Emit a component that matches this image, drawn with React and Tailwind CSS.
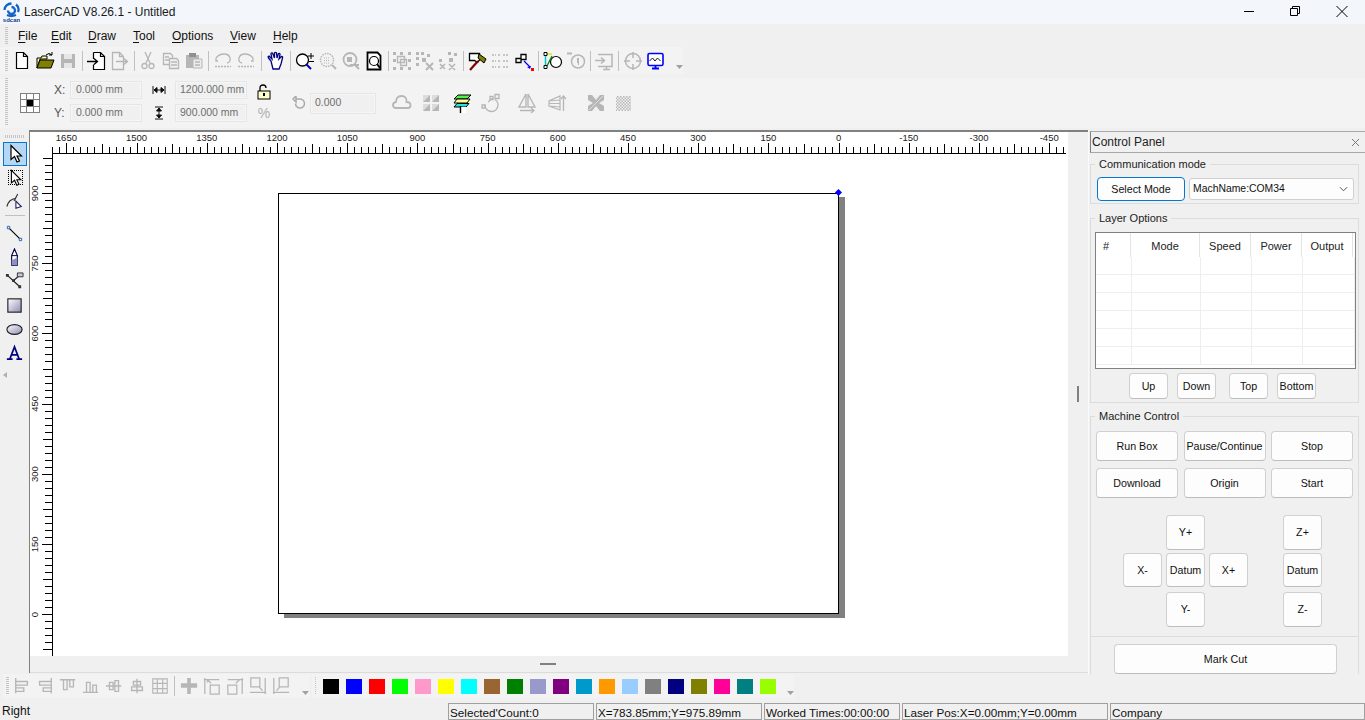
import React from "react";

const G = "#b6b6b6";

// toolbar drawings, all on a 20x20 box
const gray = { fill: "none", stroke: G, strokeWidth: 1.3 };
const icons = {
  newFile: <path d="M4.5 1.5h7l4 4v12h-11z M11.5 1.5v4h4" fill="#fff" stroke="#000" strokeWidth="1.2" />,
  open: (
    <>
      <path d="M2 7h4l1-2h5v3H5l-3 9z" fill="#ffff99" stroke="#000" />
      <path d="M2 17l3-8h14l-3 8z" fill="#808000" stroke="#000" />
      <path d="M11 4q3-3 6 0M17 4v-3M17 4h-3" fill="none" stroke="#000" />
    </>
  ),
  save: (
    <>
      <path d="M3 3h14v14H3z" fill={G} />
      <path d="M6 3h8v5H6zM6 12h8v5H6z" fill="#e6e6e6" />
    </>
  ),
  importFile: (
    <>
      <path d="M6.5 1.5h7l4 4v13h-11v-5M6.5 8V1.5M13.5 1.5v4h4" fill="#fff" stroke="#000" strokeWidth="1.2" />
      <path d="M0 10.5h10M7 7.5l3.5 3-3.5 3" fill="none" stroke="#000" strokeWidth="1.3" />
    </>
  ),
  exportFile: (
    <>
      <path d="M2.5 1.5h7l4 4v13h-11zM9.5 1.5v4h4" {...gray} />
      <path d="M6 10.5h11M14 7.5l3.5 3-3.5 3" {...gray} />
    </>
  ),
  cut: (
    <>
      <path d="M7 1l5 11M13 1l-5 11" {...gray} />
      <circle cx="6.5" cy="15" r="2.5" {...gray} />
      <circle cx="13.5" cy="15" r="2.5" {...gray} />
    </>
  ),
  copy: (
    <>
      <path d="M2.5 2.5h7l2 2v9h-9z" {...gray} />
      <path d="M8.5 7.5h7l2 2v8h-9z" fill="#f0f0f0" stroke={G} strokeWidth="1.3" />
      <path d="M4 6h4M4 9h4M10 11h6M10 14h6" {...gray} />
    </>
  ),
  paste: (
    <>
      <path d="M2 4h13v13H2z" fill={G} />
      <path d="M5 2h7v4H5z" fill="#8f8f8f" />
      <path d="M9 8h9v9H9z" fill="#ececec" stroke={G} />
      <path d="M11 11h5M11 14h5" {...gray} />
    </>
  ),
  undo: (
    <>
      <path d="M5 10H3V7M3 7q3-4 8-4t6 4-3 5" {...gray} />
      <path d="M2 15.5h16" stroke={G} strokeWidth="1.6" strokeDasharray="2 1" />
    </>
  ),
  redo: (
    <>
      <path d="M15 10h2V7M17 7q-3-4-8-4T3 7t3 5" {...gray} />
      <path d="M2 15.5h16" stroke={G} strokeWidth="1.6" strokeDasharray="2 1" />
    </>
  ),
  hand: (
    <path
      d="M5 10L2.5 7q-1-1.5.5-2l3 3-1-5q0-1.5 1.5-1L8.5 7V2q1-1.2 2 0l.5 5 1.5-4.5q1.5-.5 1.5 1L13 8l2.5-2.5q1.5 0 1 1.5L15 13l-2 5H7z"
      fill="#fff"
      stroke="#000080"
      strokeWidth="1.3"
    />
  ),
  zoomIn: (
    <>
      <circle cx="7.5" cy="9" r="6" fill="#fff" stroke="#000" strokeWidth="1.3" />
      <path d="M11.5 13.5L16 18" stroke="#0000c0" strokeWidth="2" />
      <path d="M13 5h6M16 2v6M14 10.5h5" stroke="#000" fill="none" />
    </>
  ),
  zoomDots: (
    <>
      <circle cx="9" cy="9" r="6.5" fill="none" stroke={G} strokeWidth="1.5" strokeDasharray="1.5 1" />
      <path d="M14 14l4 4" stroke={G} strokeWidth="2" />
      <path d="M6 7h6M6 9.5h6M6 12h6" stroke={G} strokeDasharray="1 1" />
    </>
  ),
  zoomPage: (
    <>
      <circle cx="9" cy="8.5" r="6.5" {...gray} strokeWidth="1.8" />
      <path d="M6 6h5v5H6z" fill={G} />
      <path d="M13 13l5 5M9 14h9" stroke={G} strokeWidth="2" />
    </>
  ),
  zoomFit: (
    <>
      <path d="M3.5 1.5h10l3 3v14h-13z" fill="#fff" stroke="#000" strokeWidth="1.8" />
      <circle cx="10" cy="10" r="4.5" fill="none" stroke="#000" strokeWidth="1.2" />
      <path d="M13 13l3 4" stroke="#000" strokeWidth="2" />
    </>
  ),
  group: (
    <>
      <path d="M1 1h3v3H1zM8 1h3v3H8zM16 1h3v3h-3zM1 8h3v3H1zM16 8h3v3h-3zM1 16h3v3H1zM8 16h3v3H8zM16 16h3v3h-3z" fill={G} />
      <path d="M5.5 5.5h7v6h-7zM8.5 8.5h6v6h-6z" {...gray} />
    </>
  ),
  ungroup: (
    <>
      <path d="M1 1h3v3H1zM6 1h3v3H6zM1 6h3v3H1zM7 7h4v4H7zM1 12h3v3H1zM12 3h3v3h-3z" fill={G} />
      <path d="M11 12l7 7M18 12l-7 7" stroke={G} strokeWidth="2" />
    </>
  ),
  ungroupAll: (
    <>
      <path d="M10 1h3v3h-3zM16 2h3v3h-3zM11 7h4v4h-4zM1 8h3v3H1z" fill={G} />
      <path d="M2 13l5 5M7 13l-5 5M11 13l6 6M17 13l-6 6" stroke={G} strokeWidth="1.6" />
    </>
  ),
  hammer: (
    <>
      <path d="M1.5 2.5h10v2l2 2-4 5-3-2H1.5z" fill="#fff" stroke="#000" strokeWidth="1.3" />
      <path d="M11 3l7 5-2 4-6-5z" fill="#808000" stroke="#000" />
      <path d="M10 10l-8 9" stroke="#800000" strokeWidth="2.2" />
    </>
  ),
  list: (
    <path
      d="M1 4h4M7 4h3M12 4h6M1 10h4M7 10h3M12 10h6M1 16h4M7 16h3M12 16h6"
      stroke={G}
      strokeWidth="1.5"
      strokeDasharray="2 1"
      fill="none"
    />
  ),
  nodes: (
    <>
      <path d="M2 7.5h5v4H2zM7 3.5h5v5H7z" fill="#fff" stroke="#000" strokeWidth="1.3" />
      <path d="M10 10l6 6" stroke="#0000ff" strokeWidth="1.2" />
      <path d="M17 15l-1 3-3-2z" fill="#0000ff" />
      <path d="M17 17h3v3h-3z" fill="#ff0000" />
    </>
  ),
  circlePath: (
    <>
      <circle cx="13" cy="11" r="5.5" fill="#fff" stroke="#000" strokeWidth="1.2" />
      <path d="M2.5 3v13" stroke="#00c8c8" strokeWidth="1.5" />
      <path d="M3 3h6" stroke="#e6e600" strokeWidth="1.5" />
      <path d="M4 15L9 5" stroke="#008000" strokeWidth="1.2" />
      <path d="M1 1.5h3v3H1zM1 14.5h3v3H1z" fill="#fff" stroke="#000" />
    </>
  ),
  clock: (
    <>
      <circle cx="12" cy="10.5" r="6.5" {...gray} strokeWidth="1.5" />
      <path d="M12 7v5" stroke={G} strokeWidth="2" />
      <path d="M1 2.5h5M12 13h1" stroke={G} strokeWidth="2" />
    </>
  ),
  monitorIn: (
    <>
      <path d="M4 3.5h14v12H4M9 18.5h7M12.5 15.5v3" {...gray} strokeWidth="1.5" />
      <path d="M1 9.5h9M7 6.5l3.5 3-3.5 3" {...gray} strokeWidth="1.5" />
    </>
  ),
  target: (
    <>
      <circle cx="10" cy="10" r="7.5" {...gray} strokeWidth="1.5" />
      <path d="M10 1v6M10 13v6M1 10h6M13 10h6" stroke={G} strokeWidth="1.5" />
    </>
  ),
  monitorWave: (
    <>
      <rect x="2" y="2.5" width="15" height="12" rx="1.5" fill="#fff" stroke="#0000ff" strokeWidth="1.6" />
      <path d="M3.5 10l3-3 2.5 3 2.5-3 3 3" fill="none" stroke="#000" strokeWidth=".9" />
      <path d="M6 17.5h7M9.5 15v2" stroke="#0000ff" strokeWidth="1.8" />
    </>
  ),
  cloud: (
    <path d="M5 15H3.5Q1 14.5 1 12t3-3q0-6 5.5-6t5 6q4 0 4 3t-2.5 3z" {...gray} strokeWidth="1.8" />
  ),
  quad: (
    <>
      <path d="M2 2h7v7H2zM11 2h7v7h-7zM2 11h7v7H2zM11 11h7v7h-7z" fill={G} />
      <path d="M2 2h7L2 9zM11 2h7l-7 7zM2 11h7l-7 7zM11 11h7l-7 7z" fill="#dcdcdc" />
    </>
  ),
  layers: (
    <>
      <path d="M6 2h13l-4 4H2z" fill="#55ee55" stroke="#000" />
      <path d="M5 6h13l-3 4H2z" fill="#ffff99" stroke="#000" />
      <path d="M5 10.5h12l-3 3.5H2z" fill="#22e6e6" stroke="#000" />
      <path d="M9 14h5v6H9z" fill="#fff" />
      <path d="M8.5 13v7" stroke="#000" strokeWidth="1.4" />
    </>
  ),
  nodeCircle: (
    <>
      <path d="M4 11.5a6.5 6.5 0 1 0 10-5" {...gray} strokeWidth="1.4" />
      <path d="M1 12h3v3H1zM14 1.5h4v4h-4zM9 3.5h3v3H9z" {...gray} />
      <path d="M7 9l5-4" {...gray} />
    </>
  ),
  mirrorH: (
    <>
      <path d="M9 1v13H2zM11 1v13h7z" {...gray} strokeWidth="1.4" />
      <path d="M3 17.5h14M14 15l3 2.5-3 2.5" {...gray} />
    </>
  ),
  mirrorV: (
    <>
      <path d="M13 3v14L2 13V8zM2 10.5h11M2 8l11-1M2 13l11 1" {...gray} strokeWidth="1.2" />
      <path d="M16.5 18V3M14 6l2.5-3L19 6" {...gray} />
    </>
  ),
  bowtie: (
    <>
      <path d="M2 2h16v16H2z" fill={G} />
      <path d="M6 2h8l-4 5zM6 18h8l-4-5zM2 7v6l5-3zM18 7v6l-5-3z" fill="#f0f0f0" />
      <path d="M3 17L17 3" stroke="#dcdcdc" />
    </>
  ),
  checker: (
    <>
      <rect x="2" y="3" width="15" height="15" fill="url(#chk)" />
      <defs>
        <pattern id="chk" width="3" height="3" patternUnits="userSpaceOnUse">
          <rect width="1.5" height="1.5" fill={G} />
          <rect x="1.5" y="1.5" width="1.5" height="1.5" fill={G} />
        </pattern>
      </defs>
    </>
  ),
  alignLeft: <path d="M3 1v17M3 5h13v4H3M3 12h9v4H3" {...gray} strokeWidth="1.5" />,
  alignRight: <path d="M17 1v17M17 5H4v4h13M17 12H8v4h9" {...gray} strokeWidth="1.5" />,
  alignTop: <path d="M1 3h17M5 3v11h4V3M12 3v8h4V3" {...gray} strokeWidth="1.5" />,
  alignBottom: <path d="M1 17h17M5 17V6h4v11M12 17V9h4v8" {...gray} strokeWidth="1.5" />,
  centerV: <path d="M1 10h17M5 6h4v8H5zM11 4h4v12h-4z" {...gray} strokeWidth="1.5" />,
  centerH: <path d="M10 2v16M6 5h8v4H6zM4 11h12v4H4z" {...gray} strokeWidth="1.5" />,
  tile: <path d="M2 2h16v16H2zM2 7h16M2 13h16M7 2v16M13 2v16" {...gray} strokeWidth="1.3" />,
  cross: <path d="M8 1h4v6h7v5h-7v7H8v-7H1V7h7z" fill={G} />,
  cornerTL: <path d="M2 1v18M1 3h17M8 9h10v10H8zM5 3l4 4M5 3v3M5 3h3" {...gray} strokeWidth="1.4" />,
  cornerTR: <path d="M18 1v18M2 3h17M2 9h10v10H2zM15 3l-4 4" {...gray} strokeWidth="1.4" />,
  cornerBR: <path d="M18 1v18M1 17h18M2 1h10v10H2zM15 15l-4-4" {...gray} strokeWidth="1.4" />,
  cornerBL: <path d="M2 1v18M1 17h18M8 1h10v10H8zM5 15l4-4" {...gray} strokeWidth="1.4" />,
  arrow: <path d="M6 1.5v14l3.5-3 2.5 5.5 2.5-1-2.5-5h4.5z" fill="#fff" stroke="#000" strokeWidth="1.2" />,
  pen: (
    <>
      <path d="M1 15Q3 7 11 6" fill="none" stroke="#333" strokeWidth="1.3" />
      <path d="M13 1L9 9" stroke="#333" strokeWidth="1.3" />
      <path d="M11 9l6 6-6 2z" fill="#fff" stroke="#202060" strokeWidth="1.2" />
    </>
  ),
  line: (
    <>
      <path d="M4 4l12 12" stroke="#000" strokeWidth="1.2" />
      <path d="M2.5 2.5h2.5v2.5h-2.5zM15 15h2.5v2.5H15z" fill="#fff" stroke="#2060c0" />
    </>
  ),
  nib: (
    <>
      <path d="M10 1l3 7v10H7V8z" fill="#fff" stroke="#000040" strokeWidth="1.2" />
      <path d="M7 13l6-3v8H7z" fill="#9090c0" />
      <path d="M7 8h6" stroke="#000040" />
    </>
  ),
  bezier: (
    <>
      <path d="M2 3l13 12M9 9l7-6" stroke="#222" strokeWidth="1.3" />
      <path d="M1 2h3v3H1zM14 14h3v3h-3zM7.5 7.5h3v3h-3z" fill="#333" />
      <path d="M13 1h6v4h-6z" fill="#c8c8e0" stroke="#333" />
    </>
  ),
  rect: (
    <>
      <defs>
        <linearGradient id="shade" x1="0" y1="0" x2="1" y2="1">
          <stop offset="0" stopColor="#fff" />
          <stop offset="1" stopColor="#8c8cb4" />
        </linearGradient>
      </defs>
      <rect x="3" y="3" width="14" height="14" fill="url(#shade)" stroke="#222" strokeWidth="1.2" />
    </>
  ),
  ellipse: <ellipse cx="10" cy="10" rx="8" ry="5.2" fill="url(#shade)" stroke="#222" strokeWidth="1.2" />,
  letterA: <path d="M2 16h6M12 16h6M5 16L10 3l5 13M7 11.5h6" fill="none" stroke="#000080" strokeWidth="1.8" />,
};

const Icon = ({ name, className = "w-[20px] h-[20px]" }) => (
  <svg viewBox="0 0 20 20" className={className}>
    {icons[name]}
  </svg>
);

const Grip = ({ className = "" }) => (
  <div className={`w-[3px] bg-[repeating-linear-gradient(to_bottom,#c4c4c4_0,#c4c4c4_1px,transparent_1px,transparent_2px)] ${className}`} />
);

const Caret = () => (
  <svg viewBox="0 0 7 4" className="w-[7px] h-[4px] self-end mb-[3px]">
    <path d="M0 0h7L3.5 4z" fill="#a0a0a0" />
  </svg>
);

// entries starting with w- are separators, the class gives their slot width
const fileBar = [
  "newFile", "open", "save", "w-[6px]", "importFile", "exportFile", "w-[5px]", "cut", "copy", "paste", "w-[6px]",
  "undo", "redo", "w-[7px]", "hand", "w-[6px]", "zoomIn", "zoomDots", "zoomPage", "zoomFit", "w-[5px]",
  "group", "ungroup", "ungroupAll", "w-[7px]", "hammer", "list", "nodes", "w-[6px]", "circlePath", "clock", "w-[5px]",
  "monitorIn", "w-[6px]", "target", "monitorWave",
];

const alignBar = [
  "alignLeft", "alignRight", "alignTop", "alignBottom", "centerV", "centerH", "tile", "w-[6px]",
  "cross", "cornerTL", "cornerTR", "cornerBR", "cornerBL",
];

const BarItems = ({ items, iconClass = "w-[20px] h-[20px]" }) =>
  items.map((item, i) =>
    item.startsWith("w-[") ? (
      <div key={i} className={`${item} h-[20px] flex justify-center`}>
        <div className="w-px h-full bg-[#c0c0c0]" />
      </div>
    ) : (
      <div key={i} className="w-[23px] h-[22px] flex items-center justify-center">
        <Icon name={item} className={iconClass} />
      </div>
    )
  );

const menus = [
  ["F", "ile", "w-[33px]"],
  ["E", "dit", "w-[37px]"],
  ["D", "raw", "w-[45px]"],
  ["T", "ool", "w-[39px]"],
  ["O", "ptions", "w-[58px]"],
  ["V", "iew", "w-[43px]"],
  ["H", "elp", "w-[30px]"],
];

const swatches = [
  "bg-[#000000]", "bg-[#0000ff]", "bg-[#ff0000]", "bg-[#00ff00]", "bg-[#ff99cc]", "bg-[#ffff00]", "bg-[#00ffff]",
  "bg-[#996633]", "bg-[#008000]", "bg-[#9999cc]", "bg-[#800080]", "bg-[#0099cc]", "bg-[#ff9900]", "bg-[#99ccff]",
  "bg-[#808080]", "bg-[#000080]", "bg-[#808000]", "bg-[#ff0099]", "bg-[#008080]", "bg-[#99ff00]",
];

const Field = ({ children, className = "" }) => (
  <div className={`h-[18px] bg-[#f0f0f0] border border-[#e6e6e6] shadow-[inset_0_0_0_1px_#f6f6f6] text-[10.5px] text-[#6f6f6f] whitespace-nowrap flex items-center ${className}`}>
    {children}
  </div>
);

const Logo = () => (
  <svg viewBox="0 0 17 20" className="w-[17px] h-[20px] ml-[3px]">
    <path d="M8.5 5a3.5 3.5 0 1 1-3.5 3.5M8.500 1.500a7 6.500 0 0 0-7 6.500M13 2.500a6.500 6.500 0 0 1 2 7.500M4 13q4 2 9 0" fill="none" stroke="#1464c8" strokeWidth="2.3" />
    <text x="8.5" y="19.5" textAnchor="middle" fontSize="6" fontWeight="700" fontFamily="Liberation Sans" fill="#103c96">sdcan</text>
  </svg>
);

const TitleBar = () => (
  <div className="h-[24px] bg-[#f3f7fc] flex items-center">
    <Logo />
    <span className="ml-[4px] text-[12px] text-[#1a1a1a]">LaserCAD V8.26.1 - Untitled</span>
    <div className="ml-auto flex items-center text-black">
      <svg viewBox="0 0 46 24" className="w-[46px] h-[24px]"><path d="M18 11.5h10" stroke="#000" /></svg>
      <svg viewBox="0 0 46 24" className="w-[46px] h-[24px]"><path d="M18.5 8.5h7v7h-7zM20.5 8.5v-2h7v7h-2" fill="none" stroke="#000" /></svg>
      <svg viewBox="0 0 46 24" className="w-[47px] h-[24px]"><path d="M18 6l11 11M29 6L18 17" stroke="#000" /></svg>
    </div>
  </div>
);

const MenuBar = () => (
  <div className="h-[23px] flex items-center">
    <Grip className="h-[18px] ml-[5px]" />
    <div className="flex ml-[10px] text-[12px] text-[#111]">
      {menus.map(([key, rest, width]) => (
        <span key={key} className={width}>
          <span className="underline underline-offset-2">{key}</span>
          {rest}
        </span>
      ))}
    </div>
  </div>
);

const FileToolbar = () => (
  <div className="h-[27px] w-[683px] bg-[#f3f3f3] flex items-center">
    <Grip className="h-[22px] ml-[5px] mr-[2.5px]" />
    <BarItems items={fileBar} />
    <div className="ml-[8px] h-[22px] flex"><Caret /></div>
  </div>
);

const SizeRow = ({ label, value, size, icon }) => (
  <div className="flex items-center h-[18px]">
    <span className="w-[16px] text-[12px] text-[#555]">{label}</span>
    <Field className="w-[72px] pl-[5px]">{value}</Field>
    <div className="w-[33px] flex justify-center">{icon}</div>
    <Field className="w-[72px] pl-[4px]">{size}</Field>
  </div>
);

const WidthMark = (
  <svg viewBox="0 0 14 10" className="w-[14px] h-[10px]"><path d="M1 1v8M13 1v8M2 5h10M2 5l3-2.5v5zM12 5L9 2.5v5z" stroke="#111" /></svg>
);
const HeightMark = (
  <svg viewBox="0 0 10 14" className="w-[10px] h-[14px]"><path d="M1 1h8M1 13h8M5 2v10M5 2L2.5 5h5zM5 12L2.5 9h5z" stroke="#111" /></svg>
);

const PropsToolbar = () => (
  <div className="h-[50px] mt-[4px] bg-[#f3f3f3] flex items-start">
    <Grip className="h-[48px] ml-[5px]" />
    <div className="ml-[12px] mt-[15px] w-[20px] h-[20px] grid grid-cols-3 gap-px bg-[#808080] border border-[#808080]">
      {[0, 1, 2, 3, 4, 5, 6, 7, 8].map((n) => (
        <div key={n} className={n === 4 ? "bg-black" : "bg-white"} />
      ))}
    </div>
    <div className="ml-[14px] mt-[3px] flex flex-col gap-[5px]">
      <SizeRow label="X:" value="0.000 mm" size="1200.000 mm" icon={WidthMark} />
      <SizeRow label="Y:" value="0.000 mm" size="900.000 mm" icon={HeightMark} />
    </div>
    <div className="w-[34px] flex flex-col items-center mt-[6px] ml-0">
      <svg viewBox="0 0 14 16" className="w-[14px] h-[16px]">
        <path d="M3 7V4q0-3 3-3t3 3" fill="none" stroke="#000" strokeWidth="1.3" />
        <rect x="1" y="7" width="12" height="8" fill="#ffffcc" stroke="#000" />
        <rect x="6" y="9" width="2" height="3" fill="#000" />
      </svg>
      <span className="mt-[6px] text-[14px] leading-[14px] text-[#b0b0b0]">%</span>
    </div>
    <div className="mt-[14px] flex items-center h-[22px]">
      <svg viewBox="0 0 14 14" className="w-[14px] h-[14px] ml-[11px] mr-[4px]">
        <path d="M4 3h4a4.5 4.5 0 1 1-4.5 4.5M4 0L1 3l3 3z" fill="none" stroke="#aaa" strokeWidth="1.5" />
      </svg>
      <div className="h-[21px] w-[66px] bg-[#f0f0f0] border border-[#e6e6e6] shadow-[inset_0_0_0_1px_#f6f6f6] text-[10.5px] text-[#6f6f6f] flex items-center pl-[4px]">0.000</div>
      <Icon name="cloud" className="ml-[16px] w-[20px] h-[20px]" />
      <Icon name="quad" className="ml-[9px] w-[20px] h-[20px]" />
      <Icon name="layers" className="ml-[11px] w-[20px] h-[20px]" />
      <Icon name="nodeCircle" className="ml-[9px] w-[20px] h-[20px]" />
      <Icon name="mirrorH" className="ml-[16px] w-[20px] h-[20px]" />
      <Icon name="mirrorV" className="ml-[10px] w-[20px] h-[20px]" />
      <Icon name="bowtie" className="ml-[19px] w-[20px] h-[20px]" />
      <Icon name="checker" className="ml-[8px] w-[20px] h-[20px]" />
    </div>
  </div>
);

const drawTools = ["line", "nib", "bezier", "rect", "ellipse", "letterA"];

const LeftToolbar = () => (
  <div className="w-[29px] shrink-0 flex flex-col items-center pt-[5px]">
    <div className="w-[20px] h-[3px] bg-[repeating-linear-gradient(to_right,#c4c4c4_0,#c4c4c4_1px,transparent_1px,transparent_2px)]" />
    <div className="mt-[4px] w-[24px] h-[24px] bg-[#b5d7f3] border border-[#0078d7] flex items-center justify-center">
      <Icon name="arrow" className="w-[20px] h-[20px]" />
    </div>
    <div className="relative w-[24px] h-[24px] flex items-center justify-center">
      <Icon name="arrow" className="w-[18px] h-[18px]" />
      <div className="absolute left-[5px] top-[4px] w-[15px] h-[15px] border border-dotted border-black" />
    </div>
    <div className="w-[24px] h-[24px] flex items-center justify-center">
      <Icon name="pen" className="w-[18px] h-[18px]" />
    </div>
    <div className="mt-[1px] mb-[5px] w-[20px] h-px bg-[#c0c0c0]" />
    {drawTools.map((name) => (
      <div key={name} className="w-[24px] h-[24px] flex items-center justify-center">
        <Icon name={name} className="w-[19px] h-[19px]" />
      </div>
    ))}
    <svg viewBox="0 0 4 6" className="w-[4px] h-[6px] mt-[7px] mr-[20px]">
      <path d="M4 0v6L0 3z" fill="#b0b0b0" />
    </svg>
  </div>
);

const tickRange = Array.from({ length: 146 }, (_, i) => i - 112);
const rowRange = Array.from({ length: 100 }, (_, i) => i - 6);
const hLabels = [1650, 1500, 1350, 1200, 1050, 900, 750, 600, 450, 300, 150, 0, -150, -300, -450];
const vLabels = [900, 750, 600, 450, 300, 150, 0];

// rulers use window coordinates through the viewBox
const Rulers = () => {
  const unit = 7.02;
  const xOf = (k) => Math.round(838.6 + k * unit) + 0.5;
  const yOf = (k) => Math.round(193 + k * unit) + 0.5;
  return (
    <svg viewBox="30 132 1038 524" className="absolute inset-0 w-full h-full" shapeRendering="crispEdges">
      <path d="M52 153.5H1066M52.5 153V656" stroke="#000" />
      {tickRange
        .filter((k) => xOf(k) > 52 && xOf(k) < 1067)
        .map((k) => (
          <path key={k} d={`M${xOf(k)} 153V${k % 10 === 0 ? 143 : k % 5 === 0 ? 144 : 147}`} stroke="#000" />
        ))}
      {rowRange
        .filter((k) => yOf(k) > 154 && yOf(k) < 656)
        .map((k) => (
          <path key={k} d={`M52 ${yOf(k)}H${k % 10 === 0 ? 42 : k % 5 === 0 ? 43 : 45}`} stroke="#000" />
        ))}
      <g fontFamily="Liberation Sans" fontSize="9.5" fill="#222" shapeRendering="auto">
        {hLabels.map((n) => (
          <text key={n} x={838.6 - (n / 150) * 70.2} y="141" textAnchor="middle">{n}</text>
        ))}
        {vLabels.map((n) => {
          const y = 614.5 - (n / 150) * 70.2;
          return (
            <text key={n} transform={`translate(38 ${y}) rotate(-90)`} textAnchor="middle">{n}</text>
          );
        })}
      </g>
    </svg>
  );
};

const Canvas = () => (
  <div className="flex-1 mb-[1px] flex flex-col border-l border-t-2 border-[#808080]">
    <div className="flex flex-1 min-h-0">
      <div className="relative flex-1 bg-white overflow-hidden">
        <Rulers />
        <div className="absolute left-[254px] top-[65px] w-[561px] h-[421px] bg-[#808080]" />
        <div className="absolute left-[248px] top-[61px] w-[561px] h-[421px] bg-white border border-black" />
        <div className="absolute left-[806px] top-[58px] w-[5px] h-[5px] bg-[#0000ff] rotate-45" />
      </div>
      <div className="w-[20px] flex items-center justify-center">
        <div className="w-[2px] h-[16px] bg-[#808080]" />
      </div>
    </div>
    <div className="h-[17px] border-b border-[#dcdcdc] flex items-center">
      <div className="ml-[510px] w-[16px] h-[2px] bg-[#808080]" />
    </div>
  </div>
);

const Btn = ({ children, className = "" }) => (
  <button className={`bg-[#fdfdfd] border border-[#d0d0d0] border-b-[#bdbdbd] rounded-[4px] text-[10.7px] text-[#111] flex items-center justify-center whitespace-nowrap ${className}`}>
    {children}
  </button>
);

const Group = ({ title, className = "", children }) => (
  <div className={`relative border border-[#dcdcdc] ${className}`}>
    <span className="absolute left-[4px] top-[-8px] px-[4px] bg-[#f0f0f0] text-[11px] leading-[14px] text-[#222]">{title}</span>
    {children}
  </div>
);

const columns = [
  ["#", "justify-start pl-[7px]"],
  ["Mode", "justify-center"],
  ["Speed", "justify-center"],
  ["Power", "justify-center"],
  ["Output", "justify-center"],
];

const LayerTable = () => (
  <div className="mt-[13px] ml-[4px] w-[261px] h-[137px] bg-white border border-[#808080] overflow-hidden">
    <div className="grid grid-cols-[35px_69px_51px_51px_51px] h-[24px]">
      {columns.map(([name, align]) => (
        <div key={name} className={`flex items-center pt-[2px] border-r border-[#e4e4e4] text-[11px] text-[#222] ${align}`}>{name}</div>
      ))}
    </div>
    {[0, 1, 2, 3, 4, 5].map((row) => (
      <div key={row} className="grid grid-cols-[36px_69px_51px_51px_1fr] h-[18px] border-b border-[#eeeeee]">
        {[0, 1, 2, 3, 4].map((c) => (
          <div key={c} className="border-r border-[#eeeeee]" />
        ))}
      </div>
    ))}
  </div>
);

const ControlPanel = () => (
  <div className="w-[277px] shrink-0 border-l border-[#fafafa] pl-[1px] pr-[6px] flex flex-col">
    <div className="mt-[1px] mr-[-6px] h-[22px] border-y border-l border-[#a8a8a8] border-l-[#808080] flex items-center pl-[1px] text-[12px] text-[#222]">
      Control Panel
      <svg viewBox="0 0 9 9" className="w-[9px] h-[9px] ml-auto mr-[5px]"><path d="M1 1l7 7M8 1L1 8" stroke="#777" /></svg>
    </div>

    <Group title="Communication mode" className="mt-[11px] h-[40px] flex items-center gap-[4px] pl-[6px] pr-[4px]">
      <button className="mt-[9px] w-[88px] h-[24px] pt-[1px] bg-[#fdfdfd] border-[1.5px] border-[#0078d7] rounded-[4px] text-[10.7px] text-[#111]">Select Mode</button>
      <div className="mt-[9px] w-[165px] h-[22px] pt-[1px] bg-[#fdfdfd] border border-[#d0d0d0] rounded-[3px] flex items-center justify-between pl-[3px] pr-[5px] text-[10.4px] text-[#111]">
        MachName:COM34
        <svg viewBox="0 0 10 6" className="w-[9px] h-[6px]"><path d="M1 1l4 4 4-4" fill="none" stroke="#444" /></svg>
      </div>
    </Group>

    <Group title="Layer Options" className="mt-[14px] h-[185px]">
      <LayerTable />
      <div className="mt-[4px] flex">
        <Btn className="ml-[38px] w-[39px] h-[26px]">Up</Btn>
        <Btn className="ml-[9px] w-[39px] h-[26px]">Down</Btn>
        <Btn className="ml-[13px] w-[39px] h-[26px]">Top</Btn>
        <Btn className="ml-[9px] w-[39px] h-[26px]">Bottom</Btn>
      </div>
    </Group>

    <Group title="Machine Control" className="mt-[13px] flex-1 border-b-0">
      <div className="mt-[14px] ml-[5px] grid grid-cols-[82px_82px_82px] gap-x-[5.5px] gap-y-[7px]">
        {["Run Box", "Pause/Continue", "Stop", "Download", "Origin", "Start"].map((label) => (
          <Btn key={label} className="h-[30px]">{label}</Btn>
        ))}
      </div>
      <div className="mt-[17px] flex">
        <div className="ml-[32px] grid grid-cols-[39px_39px_39px] gap-x-[4px] gap-y-[3px] grid-rows-[35px_36px_35px]">
          <div />
          <Btn>Y+</Btn>
          <div />
          <Btn className="h-[34px]">X-</Btn>
          <Btn className="h-[34px]">Datum</Btn>
          <Btn className="h-[34px]">X+</Btn>
          <div />
          <Btn>Y-</Btn>
        </div>
        <div className="ml-[35px] grid grid-cols-[39px] gap-y-[3px] grid-rows-[35px_36px_35px]">
          <Btn>Z+</Btn>
          <Btn className="h-[34px]">Datum</Btn>
          <Btn>Z-</Btn>
        </div>
      </div>
      <div className="mt-[9px] border-t border-[#dcdcdc] pt-[7px] flex justify-center">
        <Btn className="w-[223px] h-[30px] ml-[2px]">Mark Cut</Btn>
      </div>
    </Group>
  </div>
);

const BottomBars = () => (
  <div className="h-[24px] flex items-center">
    <div className="ml-[3px] w-[307px] h-[24px] bg-[#f3f3f3] flex items-center">
      <Grip className="h-[18px] ml-[3px] mr-[1px]" />
      <BarItems items={alignBar} iconClass="w-[18px] h-[18px]" />
      <div className="ml-[10px] h-full flex"><Caret /></div>
    </div>
    <div className="ml-[2px] w-[482px] h-[24px] bg-[#f3f3f3] flex items-center">
      <Grip className="h-[18px] ml-[3px]" />
      <div className="ml-[7px] mt-[1px] flex gap-[7px]">
        {swatches.map((color) => (
          <div key={color} className={`w-[16px] h-[15px] ${color}`} />
        ))}
      </div>
      <div className="ml-[11px] h-full flex"><Caret /></div>
    </div>
  </div>
);

const statusCells = [
  ["Selected'Count:0", "w-[146px]"],
  ["X=783.85mm;Y=975.89mm", "w-[166px]"],
  ["Worked Times:00:00:00", "w-[136px]"],
  ["Laser Pos:X=0.00mm;Y=0.00mm", "w-[206px]"],
  ["Company", "flex-1"],
];

const StatusBar = () => (
  <div className="h-[22px] flex text-[11.7px] text-[#111]">
    <span className="w-[448px] pl-[2px] pt-[5px] leading-[16px] text-[12px]">Right</span>
    <div className="flex-1 flex gap-[2px] mt-[5px]">
      {statusCells.map(([text, width]) => (
        <div key={text} className={`${width} h-[17px] border border-[#a0a0a0] pl-[1px] leading-[17px] overflow-hidden whitespace-nowrap`}>{text}</div>
      ))}
    </div>
  </div>
);

export default function App() {
  return (
    <div className="w-[1365px] h-[720px] overflow-hidden flex flex-col bg-[#f0f0f0] font-['Liberation_Sans',sans-serif]">
      <TitleBar />
      <MenuBar />
      <FileToolbar />
      <PropsToolbar />
      <div className="h-[544px] mt-[2px] flex">
        <LeftToolbar />
        <Canvas />
        <ControlPanel />
      </div>
      <BottomBars />
      <StatusBar />
    </div>
  );
}
